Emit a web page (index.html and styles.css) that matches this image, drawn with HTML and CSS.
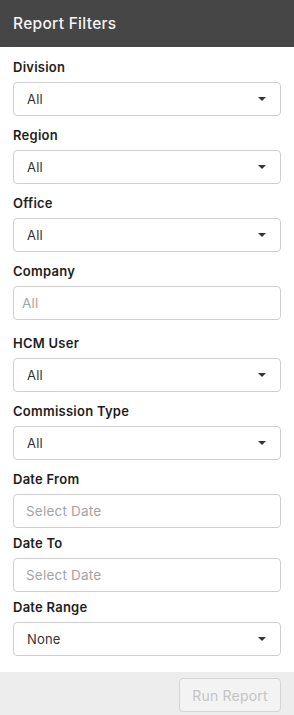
FILE: index.html
```html
<!DOCTYPE html>
<html lang="en">
<head>
  <meta charset="UTF-8" />
  <meta name="viewport" content="width=device-width, initial-scale=1.0"/>
  <title>Report Filters</title>
  <link rel="stylesheet" href="styles.css">
</head>
<body>
  <div class="panel">
    <div class="top-bar">
      <h1>Report Filters</h1>
    </div>

    <div class="filters">
      <div class="field">
        <label>Division</label>
        <div class="select"><span>All</span><svg class="caret" width="8" height="4" viewBox="0 0 8 4"><path d="M0 0h8L4 4z"/></svg></div>
      </div>
      <div class="field">
        <label>Region</label>
        <div class="select"><span>All</span><svg class="caret" width="8" height="4" viewBox="0 0 8 4"><path d="M0 0h8L4 4z"/></svg></div>
      </div>
      <div class="field">
        <label>Office</label>
        <div class="select"><span>All</span><svg class="caret" width="8" height="4" viewBox="0 0 8 4"><path d="M0 0h8L4 4z"/></svg></div>
      </div>
      <div class="field field-text">
        <label>Company</label>
        <input type="text" class="input input-sm" placeholder="All">
      </div>
      <div class="field">
        <label>HCM User</label>
        <div class="select"><span>All</span><svg class="caret" width="8" height="4" viewBox="0 0 8 4"><path d="M0 0h8L4 4z"/></svg></div>
      </div>
      <div class="field">
        <label>Commission Type</label>
        <div class="select"><span>All</span><svg class="caret" width="8" height="4" viewBox="0 0 8 4"><path d="M0 0h8L4 4z"/></svg></div>
      </div>
      <div class="field field-date">
        <label>Date From</label>
        <input type="text" class="input" placeholder="Select Date">
      </div>
      <div class="field field-date">
        <label>Date To</label>
        <input type="text" class="input" placeholder="Select Date">
      </div>
      <div class="field field-last">
        <label>Date Range</label>
        <div class="select"><span>None</span><svg class="caret" width="8" height="4" viewBox="0 0 8 4"><path d="M0 0h8L4 4z"/></svg></div>
      </div>
    </div>

    <div class="footer">
      <button class="btn" disabled>Run Report</button>
    </div>
  </div>
</body>
</html>
```

FILE: styles.css
```css
* {
  box-sizing: border-box;
}

body {
  margin: 0;
  font-family: Inter, "Noto Sans", sans-serif;
  background: #fff;
  color: #222;
}

.top-bar {
  background: #464646;
  height: 47px;
  padding: 0 13px;
  display: flex;
  align-items: center;
}

.top-bar h1 {
  margin: 0;
  font-size: 15.5px;
  font-weight: 500;
  letter-spacing: 0.3px;
  color: #f4f4f4;
}

.filters {
  padding: 10px 13px 16px;
}

.field {
  margin-bottom: 9px;
}

.field-text {
  margin-bottom: 13px;
}

.field-date {
  margin-bottom: 5px;
}

.field-last {
  margin-bottom: 0;
}

.field label {
  display: block;
  font-size: 13px;
  line-height: 20px;
  font-weight: 600;
  letter-spacing: 0.25px;
  color: #1e1e1e;
  margin-bottom: 5px;
}

.select {
  height: 34px;
  border: 1px solid #cfcfcf;
  border-radius: 4px;
  padding: 0 14px 0 13px;
  display: flex;
  align-items: center;
  justify-content: space-between;
  font-size: 13px;
  letter-spacing: 0.2px;
  color: #333;
}

.caret {
  fill: #333;
}

.input {
  display: block;
  width: 100%;
  height: 34px;
  border: 1px solid #cfcfcf;
  border-radius: 4px;
  padding: 0 12px;
  font: inherit;
  font-size: 13.5px;
  letter-spacing: 0.2px;
  color: #333;
  outline: none;
}

.input-sm {
  padding: 0 8px;
}

.input-sm::placeholder {
  color: #8a8a8a;
}

.input::placeholder {
  color: #a3a3a3;
}

.footer {
  background: #ededed;
  padding: 6px 13px 8px;
  display: flex;
  justify-content: flex-end;
}

.btn {
  width: 102px;
  height: 34px;
  background: #f3f3f3;
  border: 1px solid #d4d4d4;
  border-radius: 4px;
  font: inherit;
  font-size: 14px;
  letter-spacing: 0.2px;
  color: #c4c4c4;
}
```
